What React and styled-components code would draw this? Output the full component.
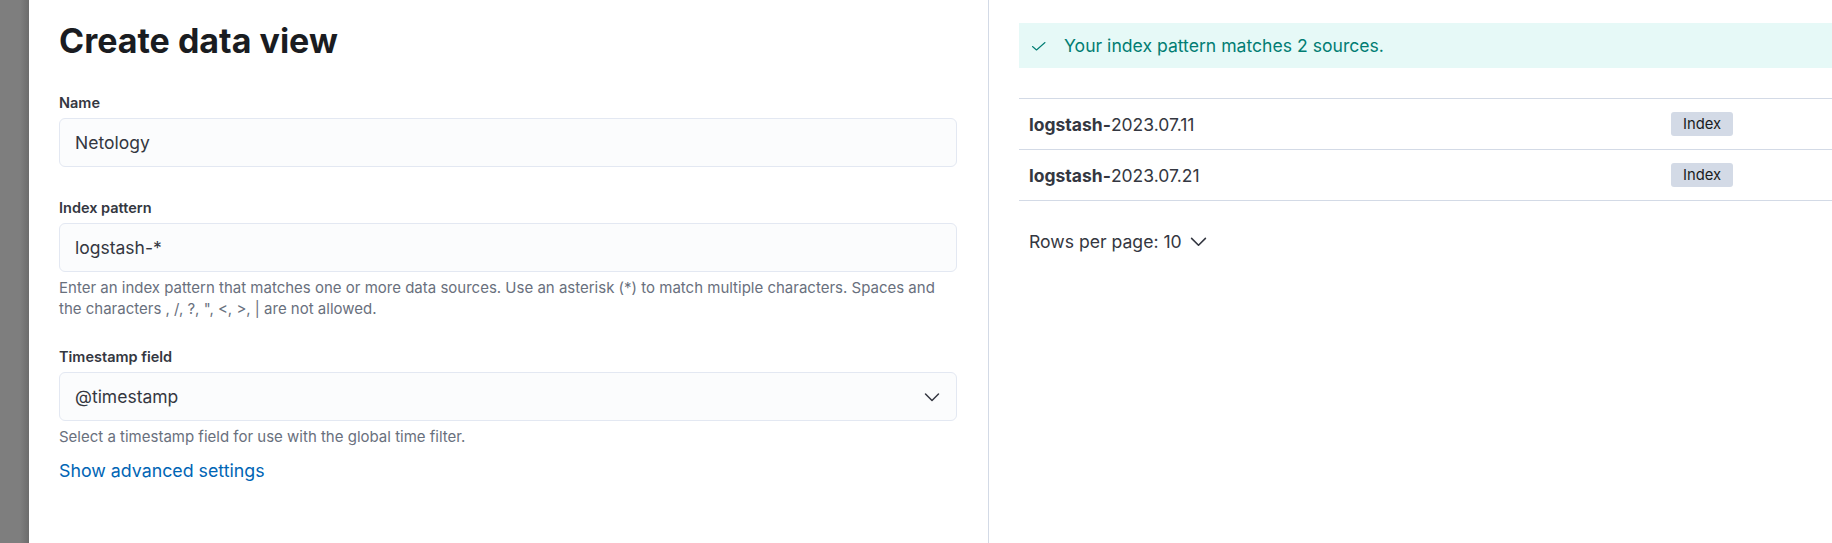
import styled, { createGlobalStyle } from 'styled-components';

const GlobalStyle = createGlobalStyle`
  html, body {
    margin: 0;
    padding: 0;
    background: #ffffff;
    font-family: Inter, "Noto Sans", sans-serif;
    -webkit-font-smoothing: antialiased;
  }
`;

const indices = ['2023.07.11', '2023.07.21'];

function ChevronDown({ size = 16 }) {
  return (
    <svg width={size} height={size} viewBox="0 0 16 16" fill="none">
      <path d="M1.5 5l6.5 6.5L14.5 5" stroke="#343741" strokeWidth="1.5" strokeLinecap="round" strokeLinejoin="round" />
    </svg>
  );
}

function Check() {
  return (
    <svg width="16" height="16" viewBox="0 0 16 16" fill="none">
      <path d="M1.5 8.5l4 3.5L14 4.5" stroke="#017d73" strokeWidth="1.1" strokeLinecap="round" strokeLinejoin="round" />
    </svg>
  );
}

function App() {
  return (
    <>
      <GlobalStyle />
      <Page>
        <Backdrop />
        <FormPanel>
          <Title>Create data view</Title>
          <Field>
            <Label>Name</Label>
            <Input>Netology</Input>
          </Field>
          <Field>
            <Label>Index pattern</Label>
            <Input>logstash-*</Input>
            <Help>
              Enter an index pattern that matches one or more data sources. Use an asterisk (*) to match multiple characters. Spaces and the characters , /, ?, ", &lt;, &gt;, | are not allowed.
            </Help>
          </Field>
          <Field>
            <Label>Timestamp field</Label>
            <Input>
              @timestamp
              <ChevronDown />
            </Input>
            <Help>Select a timestamp field for use with the global time filter.</Help>
          </Field>
          <Link>Show advanced settings</Link>
        </FormPanel>
        <PreviewPanel>
          <Callout>
            <Check />
            <span>Your index pattern matches 2 sources.</span>
          </Callout>
          <Table>
            {indices.map((date) => (
              <Row key={date}>
                <IndexName>
                  <strong>logstash-</strong>
                  {date}
                </IndexName>
                <Badge>Index</Badge>
              </Row>
            ))}
          </Table>
          <Pager>
            Rows per page: 10
            <ChevronDown size={17} />
          </Pager>
        </PreviewPanel>
      </Page>
    </>
  );
}

const Page = styled.div`
  display: flex;
  height: 100vh;
  min-height: 543px;
  overflow: hidden;
`;

const Backdrop = styled.div`
  flex: 0 0 29px;
  background: linear-gradient(90deg, #7e7e7e 0%, #7e7e7e 70%, #6c6c6c 100%);
`;

const FormPanel = styled.div`
  flex: 0 0 960px;
  box-sizing: border-box;
  padding: 21px 31px 0 30px;
  border-right: 1px solid #d3dae6;
  display: flex;
  flex-direction: column;
`;

const Title = styled.h1`
  margin: 0 0 32px;
  font-size: 34px;
  line-height: 40px;
  font-weight: 700;
  color: #1a1c21;
`;

const Field = styled.div`
  display: flex;
  flex-direction: column;
  margin-bottom: 31px;
`;

const Label = styled.div`
  font-size: 14.5px;
  line-height: 20px;
  font-weight: 600;
  color: #343741;
  margin-bottom: 5px;
`;

const Input = styled.div`
  box-sizing: border-box;
  height: 49px;
  display: flex;
  align-items: center;
  justify-content: space-between;
  padding: 0 16px 0 15px;
  background: #fbfcfd;
  border: 1px solid #e3e8f2;
  border-radius: 6px;
  font-size: 17.5px;
  color: #343741;
`;

const Help = styled.div`
  margin-top: 5px;
  font-size: 15px;
  line-height: 21px;
  color: #69707d;
  margin-bottom: -3px;
`;

const Link = styled.a`
  margin-top: -16px;
  font-size: 17.8px;
  line-height: 24px;
  color: #0065b5;
  cursor: pointer;
`;

const PreviewPanel = styled.div`
  flex: 1;
  padding: 23px 0 0 30px;
  display: flex;
  flex-direction: column;
`;

const Callout = styled.div`
  height: 45px;
  display: flex;
  align-items: center;
  gap: 17px;
  padding-left: 12px;
  background: #e6f9f7;
  color: #017d73;
  font-size: 17.6px;
`;

const Table = styled.div`
  margin-top: 30px;
  border-top: 1px solid #d3dae6;
`;

const Row = styled.div`
  height: 50px;
  display: flex;
  align-items: center;
  padding-left: 10px;
  border-bottom: 1px solid #d3dae6;
`;

const IndexName = styled.div`
  width: 642px;
  font-size: 17.5px;
  color: #343741;
  strong {
    font-weight: 700;
  }
`;

const Badge = styled.span`
  display: inline-flex;
  align-items: center;
  height: 24px;
  padding: 0 12px;
  border-radius: 3px;
  background: #d3dae6;
  color: #1a1c21;
  font-size: 14.8px;
`;

const Pager = styled.div`
  margin-top: 30px;
  padding-left: 10px;
  display: flex;
  align-items: center;
  gap: 8px;
  font-size: 17.6px;
  color: #343741;
`;

export default App;
